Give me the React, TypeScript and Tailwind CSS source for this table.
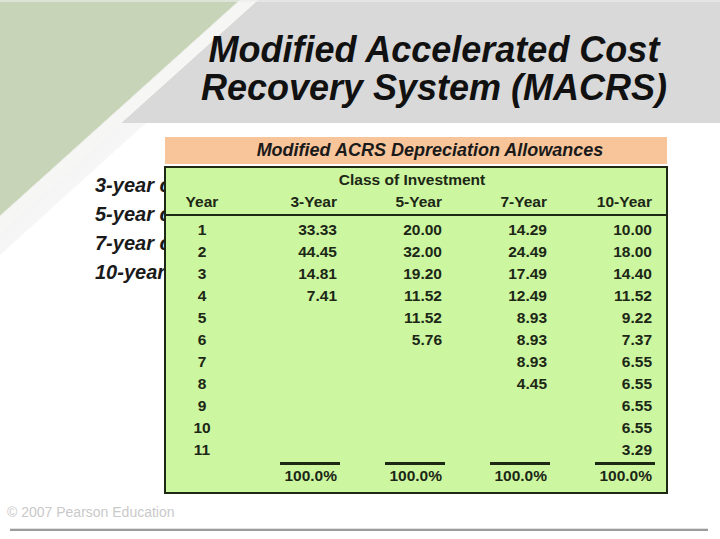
import React from "react"

const ROWS: string[][] = [
  ["1", "33.33", "20.00", "14.29", "10.00"],
  ["2", "44.45", "32.00", "24.49", "18.00"],
  ["3", "14.81", "19.20", "17.49", "14.40"],
  ["4", "7.41", "11.52", "12.49", "11.52"],
  ["5", "", "11.52", "8.93", "9.22"],
  ["6", "", "5.76", "8.93", "7.37"],
  ["7", "", "", "8.93", "6.55"],
  ["8", "", "", "4.45", "6.55"],
  ["9", "", "", "", "6.55"],
  ["10", "", "", "", "6.55"],
  ["11", "", "", "", "3.29"],
]

const CLASSES = ["3-Year", "5-Year", "7-Year", "10-Year"]
const LABELS = ["3-year class", "5-year class", "7-year class", "10-year class"]

function Backdrop() {
  return (
    <svg
      className="absolute inset-0 pointer-events-none"
      width="720"
      height="539"
      viewBox="0 0 720 539"
    >
      <defs>
        <linearGradient id="shade" x1="0" y1="0" x2="1" y2="1">
          <stop offset="0" stopColor="#e6e6e6" />
          <stop offset="1" stopColor="#ffffff" />
        </linearGradient>
      </defs>
      <polygon points="258,0 720,0 720,123 121,123" fill="#d9d9d9" />
      <polygon points="121,123 146,123 0,255 0,232" fill="url(#shade)" opacity="0.7" />
      <polygon points="0,0 240,0 0,216" fill="#c7d4b7" />
      <polygon points="240,0 258,0 0,232 0,216" fill="#f6f6f4" />
      <line x1="240" y1="0" x2="0" y2="216" stroke="#e9ece4" strokeWidth="1" />
      <rect x="0" y="0" width="720" height="2" fill="#ededed" opacity="0.6" />
    </svg>
  )
}

function DepreciationTable() {
  const cols = "grid grid-cols-[72px_99px_105px_105px_105px]"
  return (
    <div className="relative z-10 w-[504px] border-2 border-[#1d2914] bg-[#ccf6a0] pt-[1px] pb-[5px] text-[15.5px] font-bold text-[#1c2716]">
      <div className="pr-[14px]">
        <div className="h-[22px] leading-[22px] text-center pl-[6px]">Class of Investment</div>
        <div className={cols + " h-[22px] leading-[22px]"}>
          <div className="text-center">Year</div>
          {CLASSES.map((c) => (
            <div key={c} className="text-right">
              {c}
            </div>
          ))}
        </div>
      </div>
      <div className="mt-[1px] mb-[3px] h-[2px] bg-[#1d2914]" />
      <div className="pr-[14px]">
        {ROWS.map((r) => (
          <div key={r[0]} className={cols + " h-[22px] leading-[22px]"}>
            <div className="text-center">{r[0]}</div>
            {r.slice(1).map((v, i) => (
              <div key={i} className="text-right">
                {v}
              </div>
            ))}
          </div>
        ))}
        <div className={cols + " mt-[1px]"}>
          <div />
          {CLASSES.map((c) => (
            <div key={c} className="flex flex-col items-end">
              <div className="h-[3px] w-[60px] mr-[-3px] bg-[#1d2914]" />
              <div className="h-[22px] leading-[22px]">100.0%</div>
            </div>
          ))}
        </div>
      </div>
    </div>
  )
}

export default function App() {
  return (
    <div className="relative w-[720px] h-[539px] overflow-hidden bg-white font-['Liberation_Sans',Arial,sans-serif]">
      <Backdrop />
      <div className="relative flex flex-col">
        <h1 className="mt-[31px] pl-[148px] text-center text-[36px] leading-[38px] font-bold italic text-[#111111]">
          Modified Accelerated Cost
          <br />
          Recovery System (MACRS)
        </h1>

        <div className="mt-[30px] flex">
          {/* labels run on under the table, so the column clips them at its edge */}
          <div className="w-[164px] overflow-hidden pt-[34px] pl-[95px] whitespace-nowrap">
            {LABELS.map((l) => (
              <div key={l} className="h-[29px] leading-[29px] text-[20px] font-bold italic text-[#1a1a1a]">
                {l}
              </div>
            ))}
          </div>
          <div className="flex flex-col">
            <div className="relative z-10 mx-[1px] h-[27px] bg-[#f8c59b] pl-[28px] text-center text-[18px] leading-[27px] font-bold italic text-[#1a1a1a]">
              Modified ACRS Depreciation Allowances
            </div>
            <div className="mt-[2px]">
              <DepreciationTable />
            </div>
          </div>
        </div>

        <div className="mt-[10px] pl-[7px] text-[14px] leading-[16px] text-[#c9c9c9]">
          © 2007 Pearson Education
        </div>
        <div className="mt-[8px] mx-[10px] w-[698px] border-t border-[#e2e2e2]">
          <div className="h-[2px] bg-[#9c9c9c]" />
        </div>
      </div>
    </div>
  )
}
